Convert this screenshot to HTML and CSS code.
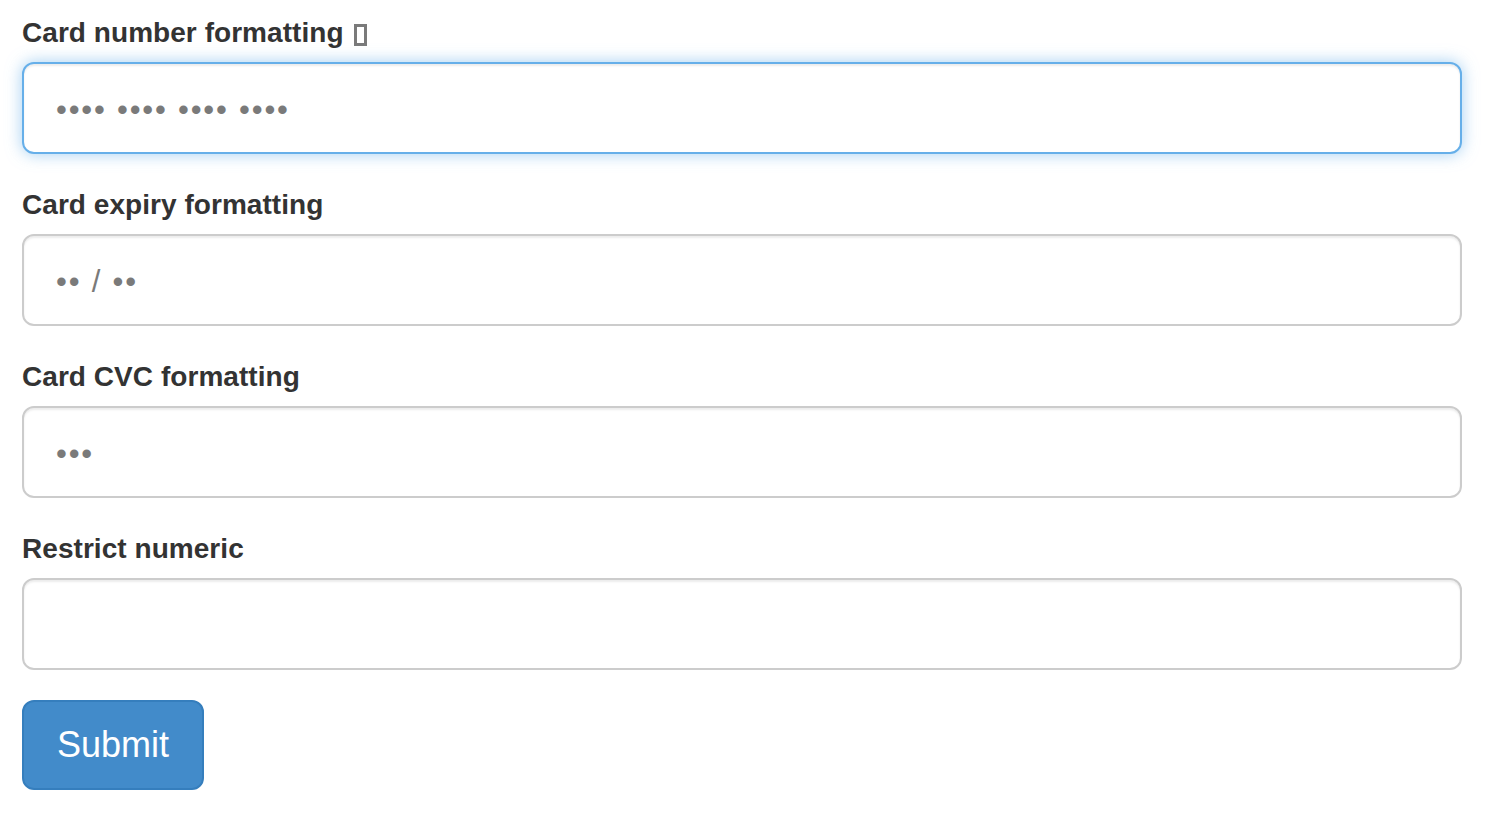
FILE: index.html
```html
<!DOCTYPE html>
<html lang="en">
<head>
<meta charset="utf-8">
<title>Card formatting</title>
<link rel="stylesheet" href="styles.css">
</head>
<body>
<form class="form" onsubmit="return false">
  <div class="form-group">
    <label class="label" for="cc-number">Card number formatting <span class="tofu"></span></label>
    <input id="cc-number" class="form-control is-focused" type="text" placeholder="•••• •••• •••• ••••">
  </div>
  <div class="form-group">
    <label class="label" for="cc-exp">Card expiry formatting</label>
    <input id="cc-exp" class="form-control" type="text" placeholder="•• / ••">
  </div>
  <div class="form-group">
    <label class="label" for="cc-cvc">Card CVC formatting</label>
    <input id="cc-cvc" class="form-control" type="text" placeholder="•••">
  </div>
  <div class="form-group">
    <label class="label" for="numeric">Restrict numeric</label>
    <input id="numeric" class="form-control" type="text">
  </div>
  <button class="btn-primary" type="submit">Submit</button>
</form>
</body>
</html>
```

FILE: styles.css
```css
html, body {
  margin: 0;
  padding: 0;
  background: #fff;
}

body {
  font-family: "Liberation Sans", Arial, sans-serif;
  color: #333;
}

.form {
  display: flex;
  flex-direction: column;
  padding: 12px 26px 0 22px;
}

.form-group {
  display: flex;
  flex-direction: column;
  margin-bottom: 30px;
}

.label {
  display: block;
  font-size: 28px;
  line-height: 40px;
  padding-top: 1px;
  font-weight: bold;
  margin-bottom: 9px;
  color: #333;
  letter-spacing: 0.05px;
}

.tofu {
  display: inline-block;
  width: 7px;
  height: 16px;
  border: 3px solid #7a7a7a;
  vertical-align: -4px;
  margin-left: 3px;
}

.form-control {
  box-sizing: border-box;
  display: block;
  width: 100%;
  height: 92px;
  margin: 0;
  padding: 20px 32px;
  font-family: "Liberation Sans", Arial, sans-serif;
  font-size: 36px;
  line-height: 48px;
  color: #555;
  background: #fff;
  border: 2px solid #ccc;
  border-radius: 12px;
  box-shadow: inset 0 2px 2px rgba(0, 0, 0, 0.075);
  outline: none;
}

.form-control::placeholder {
  color: #7a7a7a;
  opacity: 1;
  font-size: 31px;
  letter-spacing: 1.8px;
}

.form-control.is-focused {
  border-color: #66afe9;
  box-shadow: inset 0 2px 2px rgba(0, 0, 0, 0.075), 0 0 16px rgba(102, 175, 233, 0.6);
}

.btn-primary {
  align-self: flex-start;
  box-sizing: border-box;
  height: 90px;
  padding: 0 33px;
  font-family: "Liberation Sans", Arial, sans-serif;
  font-size: 36px;
  line-height: 48px;
  color: #fff;
  background: #428bca;
  border: 2px solid #357ebd;
  border-radius: 12px;
  cursor: pointer;
}
```
